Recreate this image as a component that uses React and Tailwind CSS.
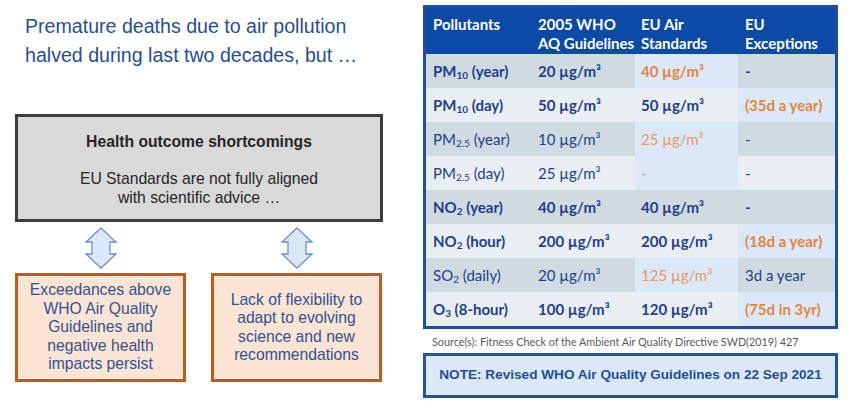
const ROWS = [
  { name: ['PM', '10', ' (year)'], who: '20 µg/m³', eu: '40 µg/m³', ex: '-', bold: true, hl: 'eu' },
  { name: ['PM', '10', ' (day)'], who: '50 µg/m³', eu: '50 µg/m³', ex: '(35d a year)', bold: true, hl: 'ex' },
  { name: ['PM', '2.5', ' (year)'], who: '10 µg/m³', eu: '25 µg/m³', ex: '-', bold: false, hl: 'eu' },
  { name: ['PM', '2.5', ' (day)'], who: '25 µg/m³', eu: '-', ex: '-', bold: false, hl: 'eu' },
  { name: ['NO', '2', ' (year)'], who: '40 µg/m³', eu: '40 µg/m³', ex: '-', bold: true, hl: null },
  { name: ['NO', '2', ' (hour)'], who: '200 µg/m³', eu: '200 µg/m³', ex: '(18d a year)', bold: true, hl: 'ex' },
  { name: ['SO', '2', ' (daily)'], who: '20 µg/m³', eu: '125 µg/m³', ex: '3d a year', bold: false, hl: 'eu' },
  { name: ['O', '3', ' (8-hour)'], who: '100 µg/m³', eu: '120 µg/m³', ex: '(75d in 3yr)', bold: true, hl: 'ex' },
]

function UpDownArrow() {
  return (
    <svg width="34" height="42" viewBox="0 0 34 42">
      <polygon
        points="17,1 32,15 26,15 26,27 32,27 17,41 2,27 8,27 8,15 2,15"
        fill="#dae8f8"
        stroke="#6f90c6"
        strokeWidth="1.3"
        strokeLinejoin="miter"
      />
    </svg>
  )
}

function Cell({ children, bg, className }) {
  return (
    <div className={`h-[34px] flex items-center ${bg} ${className}`}>
      {children}
    </div>
  )
}

export default function App() {
  return (
    <div className="w-[850px] h-[403px] bg-white flex overflow-hidden font-['Liberation_Sans',Arial,sans-serif]">

      {/* Left side: headline + diagram */}
      <div className="w-[423px] flex flex-col">
        <h1 className="pt-[12px] pl-[25px] text-[19.6px] leading-[29px] text-[#1f4e9a] font-normal">
          Premature deaths due to air pollution<br />
          halved during last two decades, but …
        </h1>

        <div className="mt-[44px] ml-[15px] w-[368px] h-[108px] border-[3px] border-[#3d3d3d] bg-[#d9d9d9] text-center text-[#262626] pt-[15px]">
          <p className="font-bold text-[15.7px] leading-[19px]">Health outcome shortcomings</p>
          <p className="mt-[18px] text-[15.7px] leading-[19px]">
            EU Standards are not fully aligned<br />
            with scientific advice …
          </p>
        </div>

        <div className="mt-[5px] ml-[15px] flex gap-[25px]">
          <div className="w-[171px] flex justify-center"><UpDownArrow /></div>
          <div className="w-[171px] flex justify-center"><UpDownArrow /></div>
        </div>

        <div className="mt-[4px] ml-[15px] flex gap-[25px]">
          <div className="w-[171px] h-[109px] border-[3px] border-[#c55a11] bg-[#fbe4d3] flex items-center justify-center text-center text-[15.7px] leading-[18.5px] text-[#2e5395]">
            <p>Exceedances above<br />WHO Air Quality<br />Guidelines and<br />negative health<br />impacts persist</p>
          </div>
          <div className="w-[171px] h-[109px] border-[3px] border-[#c55a11] bg-[#fbe4d3] flex items-center justify-center text-center text-[15.7px] leading-[18.5px] text-[#2e5395]">
            <p>Lack of flexibility to<br />adapt to evolving<br />science and new<br />recommendations</p>
          </div>
        </div>
      </div>

      {/* Right side: table */}
      <div className="w-[415px] pt-[5px] flex flex-col">
        <div className="border-[3px] border-[#1f4e9c] font-['Lato',sans-serif] text-[15px]">
          <div className="grid grid-cols-[107px_102px_103px_97px] bg-[#0c4aa7] text-white font-bold leading-[18.5px] h-[46px] pt-[7px]">
            <div className="pl-[7px]">Pollutants</div>
            <div className="pl-[5px]">2005 WHO<br />AQ Guidelines</div>
            <div className="pl-[6px]">EU Air<br />Standards</div>
            <div className="pl-[7px]">EU<br />Exceptions</div>
          </div>

          {ROWS.map((r, i) => {
            const base = i % 2 === 0 ? 'bg-[#d0dbe1]' : 'bg-[#e9eef2]'
            const light = 'bg-[#dbe8f8]'
            const weight = r.bold ? 'font-bold' : 'font-normal'
            const orange = r.bold ? 'text-[#e5853a]' : 'text-[#e99a5c]'
            return (
              <div key={i} className={`grid grid-cols-[107px_102px_103px_97px] text-[#1f3f8c] ${weight}`}>
                <Cell bg={base} className="pl-[7px]">
                  <span>
                    {r.name[0]}
                    <sub className="text-[10px]">{r.name[1]}</sub>
                    {r.name[2]}
                  </span>
                </Cell>
                <Cell bg={base} className="pl-[5px]">{r.who}</Cell>
                <Cell bg={r.hl === 'eu' ? light : base} className={`pl-[6px] ${r.hl === 'eu' ? orange : ''}`}>
                  {r.eu}
                </Cell>
                <Cell bg={r.hl === 'ex' ? light : base} className={`pl-[7px] ${r.hl === 'ex' ? orange : ''}`}>
                  {r.ex}
                </Cell>
              </div>
            )
          })}
        </div>

        <p className="mt-[6px] pl-[9px] font-['Lato',sans-serif] text-[10.8px] leading-[13px] text-[#595959]">
          Source(s): Fitness Check of the Ambient Air Quality Directive SWD(2019) 427
        </p>

        <div className="mt-[5px] h-[45px] border-[3px] border-[#2553a0] bg-[#dbe8f8] flex items-center justify-center">
          <p className="font-bold text-[13.6px] text-[#1f4e9a]">
            NOTE: Revised WHO Air Quality Guidelines on 22 Sep 2021
          </p>
        </div>
      </div>
    </div>
  )
}
